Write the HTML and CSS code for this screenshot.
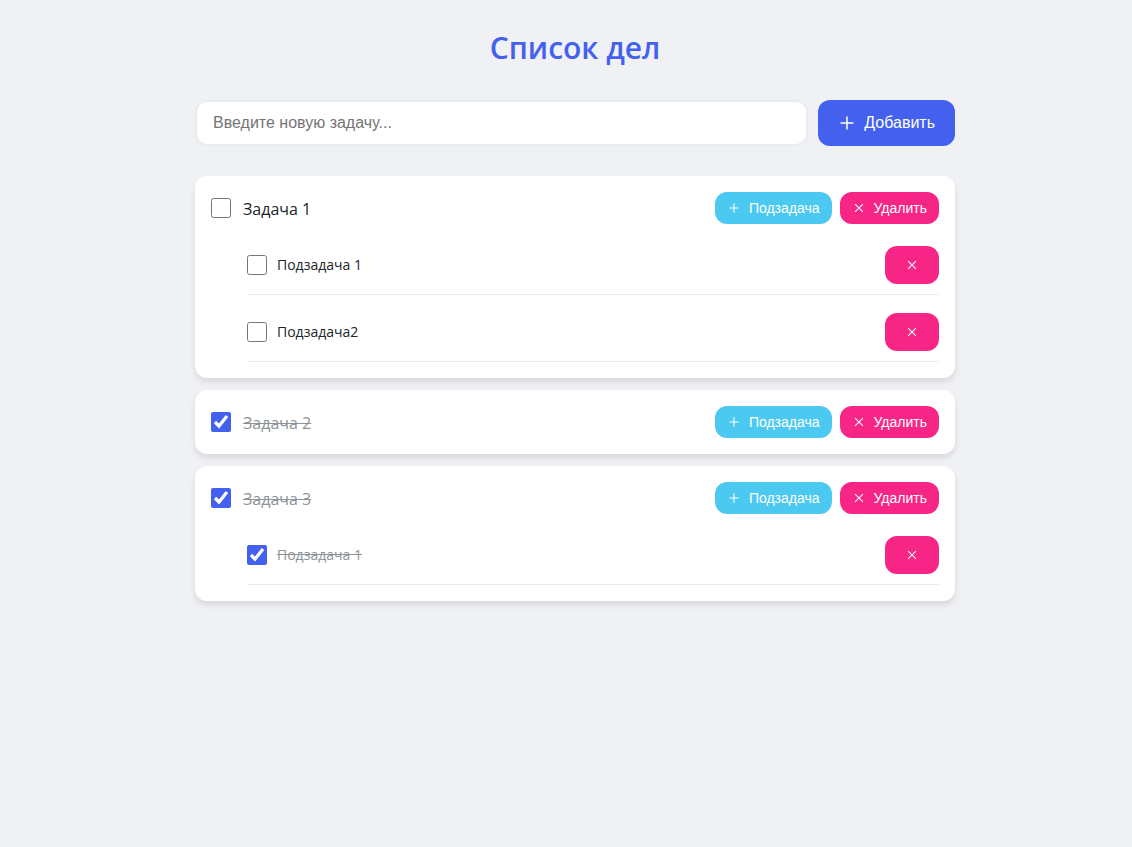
FILE: index.html
```html
<!DOCTYPE html>
<html lang="ru">
<head>
<meta charset="utf-8">
<meta name="viewport" content="width=device-width, initial-scale=1">
<title>Список дел</title>
<link rel="stylesheet" href="styles.css">
</head>
<body>
<svg class="symbols" aria-hidden="true">
  <symbol id="plus" viewBox="0 0 14 14"><path d="M7 0.5V13.5M0.5 7H13.5"/></symbol>
  <symbol id="cross" viewBox="0 0 14 14"><path d="M1.5 1.5L12.5 12.5M12.5 1.5L1.5 12.5"/></symbol>
</svg>
<main class="container">
  <h1 class="title">Список дел</h1>
  <form class="add-form">
    <input class="task-input" type="text" placeholder="Введите новую задачу..." aria-label="Новая задача">
    <button class="btn btn-primary" type="button"><svg class="icon icon-large"><use href="#plus"/></svg>Добавить</button>
  </form>
  <ul class="tasks">
    <li class="task">
      <div class="task-row">
        <input class="check" type="checkbox" id="t1"><label class="task-name" for="t1">Задача 1</label>
        <div class="actions">
          <button class="btn btn-small btn-info" type="button"><svg class="icon"><use href="#plus"/></svg>Подзадача</button>
          <button class="btn btn-small btn-danger" type="button"><svg class="icon"><use href="#cross"/></svg>Удалить</button>
        </div>
      </div>
      <ul class="subtasks">
        <li class="subtask">
          <input class="check" type="checkbox" id="t1s1"><label class="subtask-name" for="t1s1">Подзадача 1</label>
          <button class="btn btn-icon btn-danger" type="button" aria-label="Удалить подзадачу"><svg class="icon"><use href="#cross"/></svg></button>
        </li>
        <li class="subtask">
          <input class="check" type="checkbox" id="t1s2"><label class="subtask-name" for="t1s2">Подзадача2</label>
          <button class="btn btn-icon btn-danger" type="button" aria-label="Удалить подзадачу"><svg class="icon"><use href="#cross"/></svg></button>
        </li>
      </ul>
    </li>
    <li class="task">
      <div class="task-row">
        <input class="check" type="checkbox" id="t2" checked><label class="task-name done" for="t2">Задача 2</label>
        <div class="actions">
          <button class="btn btn-small btn-info" type="button"><svg class="icon"><use href="#plus"/></svg>Подзадача</button>
          <button class="btn btn-small btn-danger" type="button"><svg class="icon"><use href="#cross"/></svg>Удалить</button>
        </div>
      </div>
    </li>
    <li class="task">
      <div class="task-row">
        <input class="check" type="checkbox" id="t3" checked><label class="task-name done" for="t3">Задача 3</label>
        <div class="actions">
          <button class="btn btn-small btn-info" type="button"><svg class="icon"><use href="#plus"/></svg>Подзадача</button>
          <button class="btn btn-small btn-danger" type="button"><svg class="icon"><use href="#cross"/></svg>Удалить</button>
        </div>
      </div>
      <ul class="subtasks">
        <li class="subtask">
          <input class="check" type="checkbox" id="t3s1" checked><label class="subtask-name done" for="t3s1">Подзадача 1</label>
          <button class="btn btn-icon btn-danger" type="button" aria-label="Удалить подзадачу"><svg class="icon"><use href="#cross"/></svg></button>
        </li>
      </ul>
    </li>
  </ul>
</main>
</body>
</html>
```

FILE: styles.css
```css
* { box-sizing: border-box; }

body {
  margin: 0;
  padding: 24px 20px 24px 38px;
  background: #f0f1f5;
  color: #212529;
  font-family: "Segoe UI", "Open Sans", "Noto Sans", sans-serif;
}

ul { list-style: none; margin: 0; padding: 0; }

.symbols { display: none; }

.container { max-width: 760px; margin: 0 auto; }

.title {
  margin: 0 0 28px;
  color: #4361ee;
  font-size: 30px;
  line-height: 48px;
  font-weight: 600;
  text-align: center;
}

.add-form { display: flex; gap: 10px; margin-bottom: 30px; }

.task-input {
  flex: 1;
  min-width: 0;
  padding: 0 16px;
  border: 2px solid #e9ecef;
  border-radius: 12px;
  background: #fff;
  font: 16px "Liberation Sans", Arial, sans-serif;
}

.btn {
  display: inline-flex;
  align-items: center;
  justify-content: center;
  border: 0;
  border-radius: 12px;
  color: #fff;
  font-family: "Liberation Sans", Arial, sans-serif;
  cursor: pointer;
}

.btn-primary { height: 46px; padding: 0 20px 0 22px; gap: 10px; background: #4361ee; font-size: 16px; }
.btn-small { height: 32px; padding: 0 12px 0 14px; gap: 10px; font-size: 14px; }
.btn-icon { width: 54px; height: 38px; padding: 0; }
.btn-info { background: #4cc9f0; }
.btn-danger { background: #f72585; }

.icon { width: 10px; height: 10px; fill: none; stroke: currentColor; stroke-width: 1.5; }
.icon-large { width: 14px; height: 14px; }

.tasks { display: grid; gap: 12px; }

.task {
  padding: 16px;
  border-radius: 12px;
  background: #fff;
  box-shadow: 0 4px 6px rgba(0, 0, 0, 0.1);
}

.task-row { display: flex; align-items: center; gap: 12px; }
.task-name { flex: 1; padding-top: 2px; font-size: 16px; line-height: 24px; }
.actions { display: flex; gap: 8px; }

.subtasks { display: grid; gap: 8px; margin: 12px 0 0 36px; }
.subtask { display: flex; align-items: center; gap: 10px; padding: 10px 0; border-bottom: 1px solid #e9ecef; }
.subtask-name { flex: 1; font-size: 14px; line-height: 24px; }

.check { width: 20px; height: 20px; margin: 0; accent-color: #4361ee; }
.done { color: #8d9499; text-decoration: line-through; }
```
